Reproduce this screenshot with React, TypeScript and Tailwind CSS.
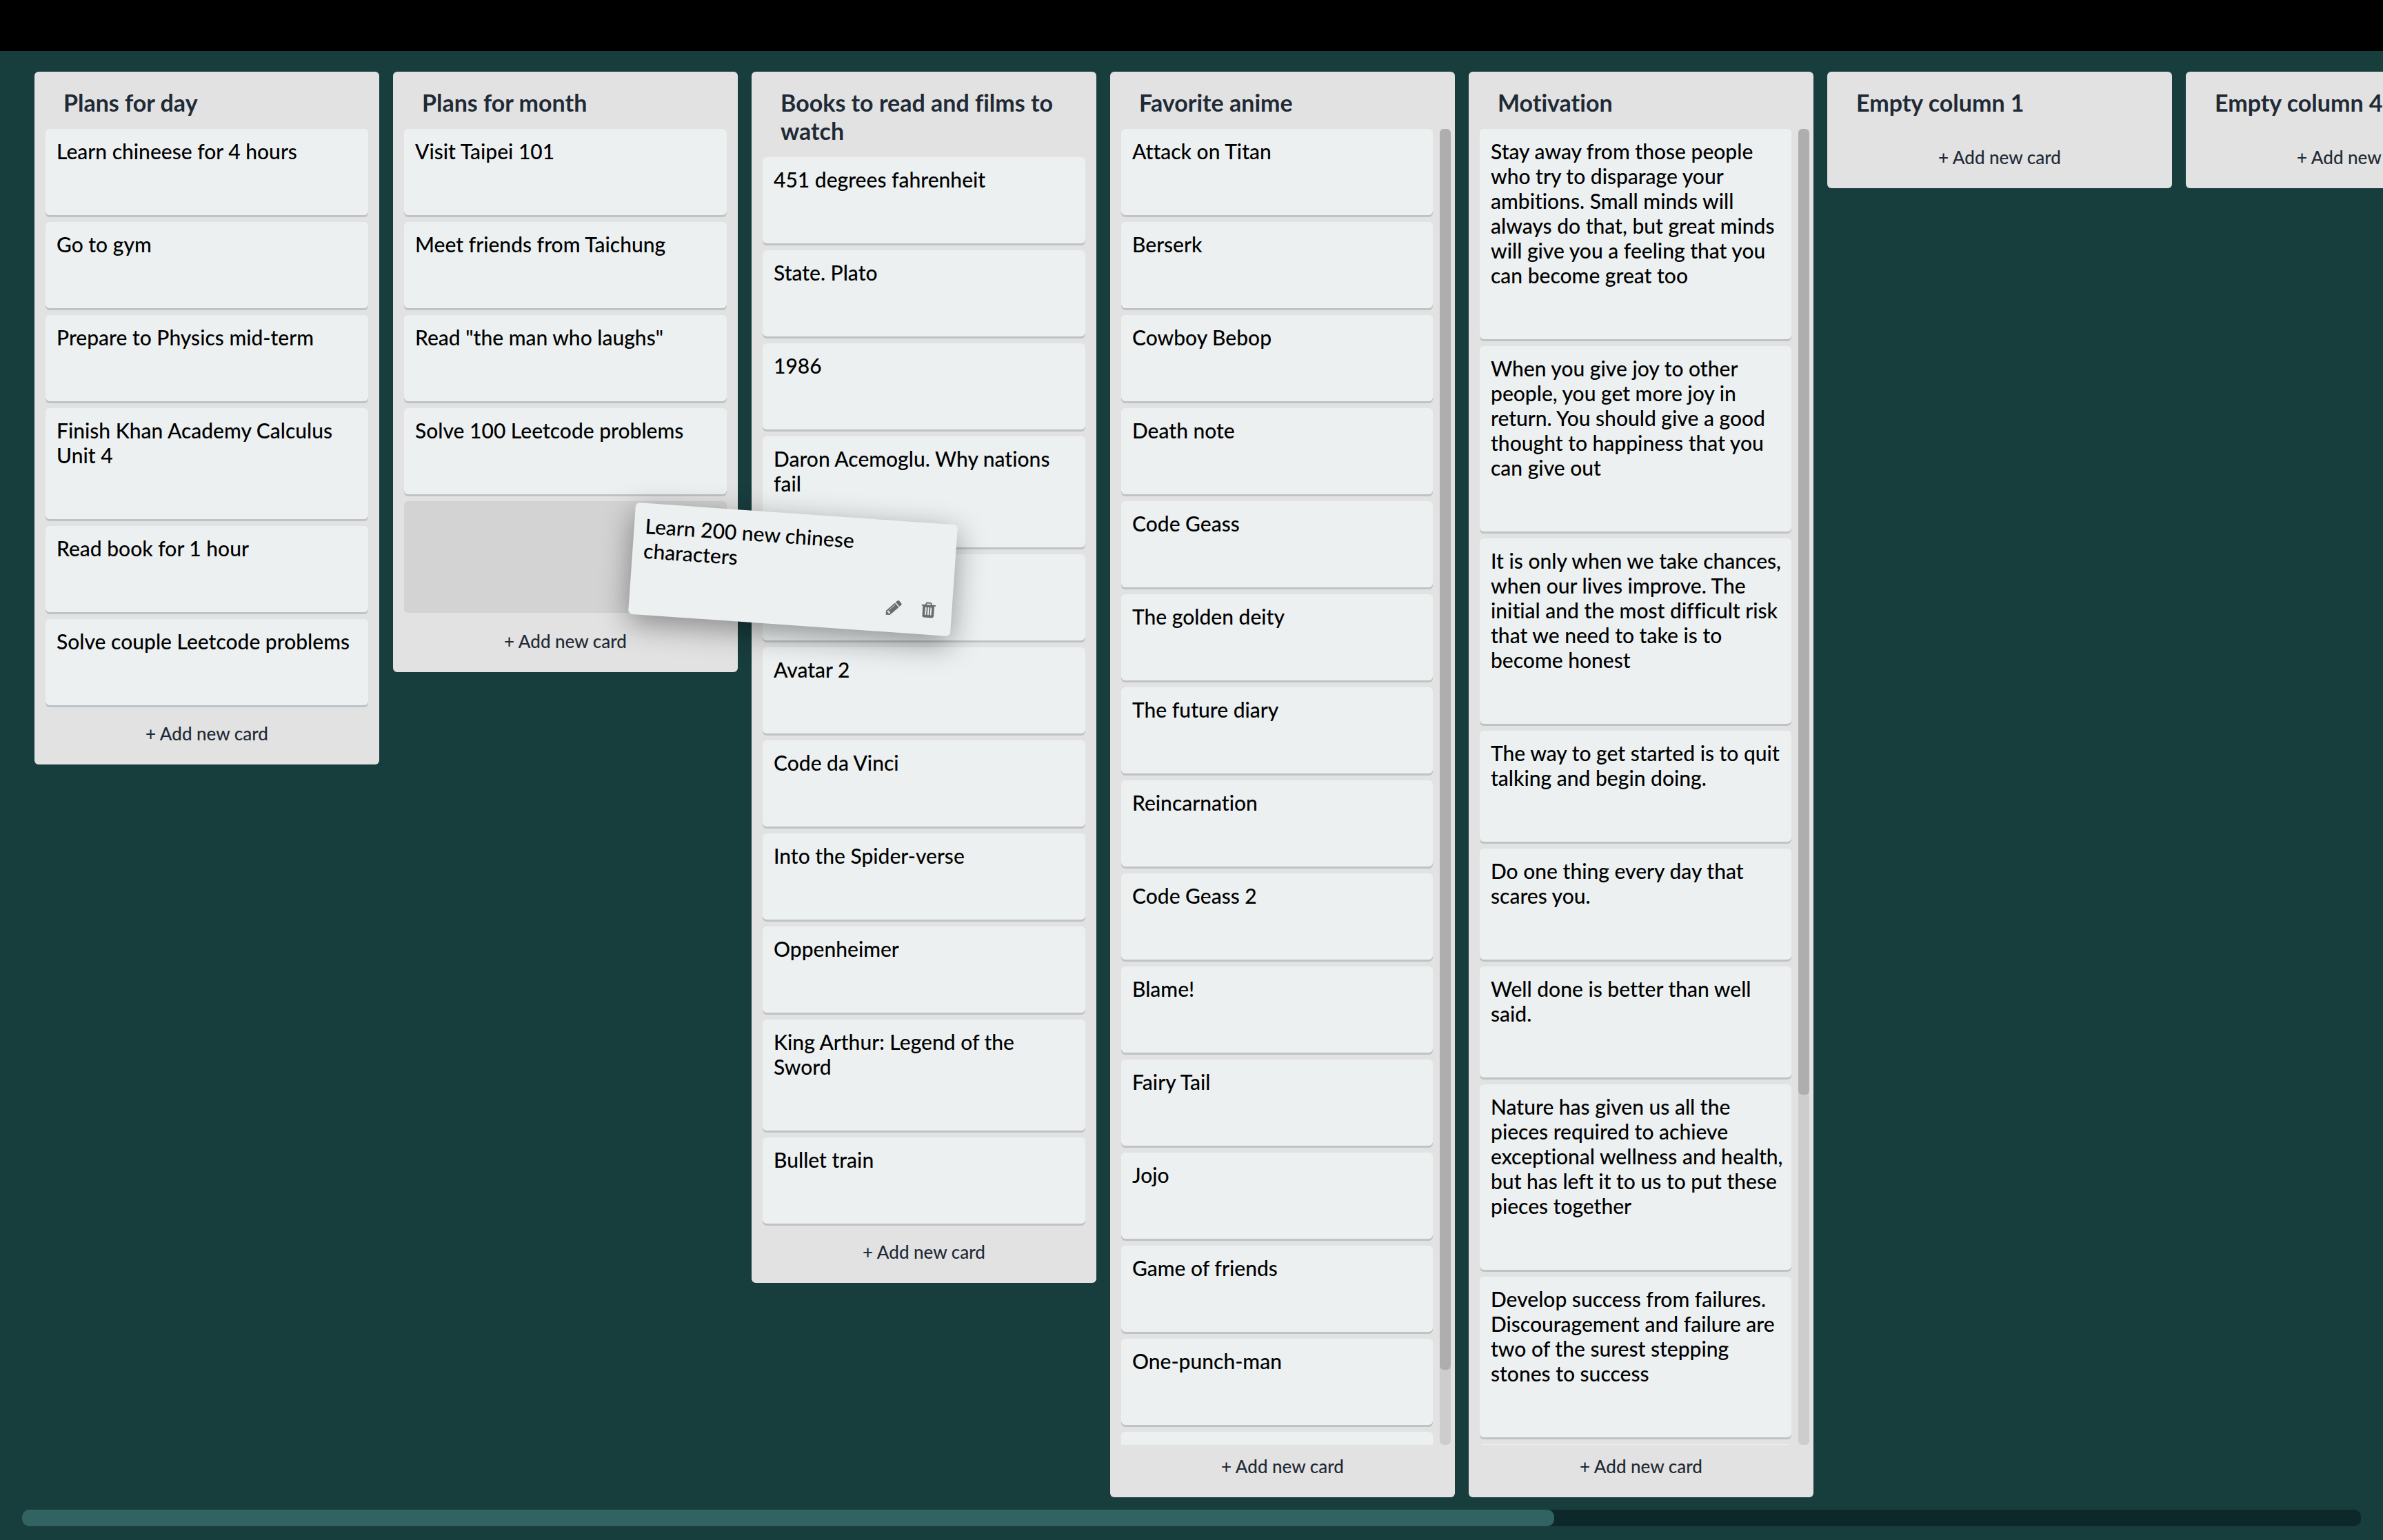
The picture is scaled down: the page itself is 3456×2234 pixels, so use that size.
type ColumnData = { title: string; cards: string[]; thumb?: string; dragged?: string };

const columns: ColumnData[] = [
  {
    title: "Plans for day",
    cards: [
      "Learn chineese for 4 hours",
      "Go to gym",
      "Prepare to Physics mid-term",
      "Finish Khan Academy Calculus\nUnit 4",
      "Read book for 1 hour",
      "Solve couple Leetcode problems",
    ],
  },
  {
    title: "Plans for month",
    cards: [
      "Visit Taipei 101",
      "Meet friends from Taichung",
      'Read "the man who laughs"',
      "Solve 100 Leetcode problems",
    ],
    dragged: "Learn 200 new chinese\ncharacters",
  },
  {
    title: "Books to read and films to\nwatch",
    cards: [
      "451 degrees fahrenheit",
      "State. Plato",
      "1986",
      "Daron Acemoglu. Why nations\nfail",
      "",
      "Avatar 2",
      "Code da Vinci",
      "Into the Spider-verse",
      "Oppenheimer",
      "King Arthur: Legend of the\nSword",
      "Bullet train",
    ],
  },
  {
    title: "Favorite anime",
    thumb: "94.3%",
    cards: [
      "Attack on Titan",
      "Berserk",
      "Cowboy Bebop",
      "Death note",
      "Code Geass",
      "The golden deity",
      "The future diary",
      "Reincarnation",
      "Code Geass 2",
      "Blame!",
      "Fairy Tail",
      "Jojo",
      "Game of friends",
      "One-punch-man",
      "",
    ],
  },
  {
    title: "Motivation",
    thumb: "73.4%",
    cards: [
      "Stay away from those people\nwho try to disparage your\nambitions. Small minds will\nalways do that, but great minds\nwill give you a feeling that you\ncan become great too",
      "When you give joy to other\npeople, you get more joy in\nreturn. You should give a good\nthought to happiness that you\ncan give out",
      "It is only when we take chances,\nwhen our lives improve. The\ninitial and the most difficult risk\nthat we need to take is to\nbecome honest",
      "The way to get started is to quit\ntalking and begin doing.",
      "Do one thing every day that\nscares you.",
      "Well done is better than well\nsaid.",
      "Nature has given us all the\npieces required to achieve\nexceptional wellness and health,\nbut has left it to us to put these\npieces together",
      "Develop success from failures.\nDiscouragement and failure are\ntwo of the surest stepping\nstones to success",
      "",
    ],
  },
  { title: "Empty column 1", cards: [] },
  { title: "Empty column 4", cards: [] },
];

function PencilIcon() {
  return (
    <svg viewBox="0 0 1792 1792" className="size-[26px] fill-current" aria-hidden="true">
      <path d="M491 1536l91-91-235-235-91 91v107h128v128h107zm523-928q0-22-22-22-10 0-17 7l-542 542q-7 7-7 17 0 22 22 22 10 0 17-7l542-542q7-7 7-17zm-54-192l416 416-832 832h-416v-416zm683 96q0 53-37 90l-166 166-416-416 166-165q36-38 90-38 53 0 91 38l235 234q37 39 37 91z" />
    </svg>
  );
}

function TrashIcon() {
  return (
    <svg viewBox="0 0 1792 1792" className="size-[26px] fill-current" aria-hidden="true">
      <path d="M704 1376v-704q0-14-9-23t-23-9h-64q-14 0-23 9t-9 23v704q0 14 9 23t23 9h64q14 0 23-9t9-23zm256 0v-704q0-14-9-23t-23-9h-64q-14 0-23 9t-9 23v704q0 14 9 23t23 9h64q14 0 23-9t9-23zm256 0v-704q0-14-9-23t-23-9h-64q-14 0-23 9t-9 23v704q0 14 9 23t23 9h64q14 0 23-9t9-23zm-544-992h448l-48-117q-7-9-17-11h-317q-10 2-17 11zm928 32v64q0 14-9 23t-23 9h-96v948q0 83-47 143.5t-113 60.5h-832q-66 0-113-58.5t-47-141.5v-952h-96q-14 0-23-9t-9-23v-64q0-14 9-23t23-9h309l70-167q15-37 54-63t79-26h320q40 0 79 26t54 63l70 167h309q14 0 23 9t9 23z" />
    </svg>
  );
}

function Card({ text }: { text: string }) {
  return (
    <li className="mb-[10px] min-h-[125px] shrink-0 rounded-md bg-[#ecf0f1] px-4 pt-[14px] pb-[75px] whitespace-pre text-black shadow-[0_3px_0_#bdc3c7]">
      {text}
    </li>
  );
}

function DraggedCard({ text }: { text: string }) {
  return (
    <li className="relative mb-[10px] h-[162px] shrink-0 rounded-md bg-[#d3d3d3]">
      <div className="absolute top-[18px] left-[330px] z-10 h-[162px] w-full rotate-4 rounded-md bg-[#ecf0f1] px-4 pt-[14px] whitespace-pre text-black shadow-[0_12px_44px_rgba(0,0,0,0.4)]">
        {text}
        <div className="absolute right-[21px] bottom-[23px] flex gap-6 text-[#6a6c6c]">
          <button type="button" aria-label="Edit card">
            <PencilIcon />
          </button>
          <button type="button" aria-label="Delete card">
            <TrashIcon />
          </button>
        </div>
      </div>
    </li>
  );
}

function Column({ column }: { column: ColumnData }) {
  return (
    <section className="flex max-h-full w-[500px] shrink-0 flex-col rounded-md bg-[#e2e2e2]">
      <h2 className="shrink-0 pt-6 pr-6 pb-[18px] pl-[42px] text-[34px] leading-[41px] font-bold whitespace-pre text-[#1f2a36]">
        {column.title}
      </h2>
      {column.thumb ? (
        <div className="flex min-h-0 gap-[10px] pr-[6px] pl-4">
          <ul className="flex min-w-0 flex-1 flex-col overflow-hidden">
            {column.cards.map((text, i) => (
              <Card key={i} text={text} />
            ))}
          </ul>
          <div className="w-4 shrink-0 rounded-md bg-[#cdcdcd]">
            <div className="rounded-md bg-[#aeaeae]" style={{ height: column.thumb }} />
          </div>
        </div>
      ) : (
        <ul className="flex min-h-[10px] flex-col px-4">
          {column.cards.map((text, i) => (
            <Card key={i} text={text} />
          ))}
          {column.dragged && <DraggedCard text={column.dragged} />}
        </ul>
      )}
      <button type="button" className="h-[76px] w-full shrink-0 pb-[14px] text-[26px] text-[#1f2a36]">
        + Add new card
      </button>
    </section>
  );
}

export default function App() {
  return (
    <div className="flex h-screen flex-col overflow-hidden bg-[#183d3d] font-['Lato',sans-serif] text-[30px] leading-[36px] font-medium [font-variant-ligatures:none]">
      <header className="h-[74px] shrink-0 bg-black" />
      <main className="flex min-h-0 flex-1 items-start gap-5 overflow-hidden pt-[30px] pb-[18px] pl-[50px]">
        {columns.map((column) => (
          <Column key={column.title} column={column} />
        ))}
      </main>
      <div className="mx-8 mb-5 h-6 shrink-0 rounded-[10px] bg-[#0d2829]">
        <div className="h-full rounded-[10px] bg-[#306361]" style={{ width: "65.5%" }} />
      </div>
    </div>
  );
}
